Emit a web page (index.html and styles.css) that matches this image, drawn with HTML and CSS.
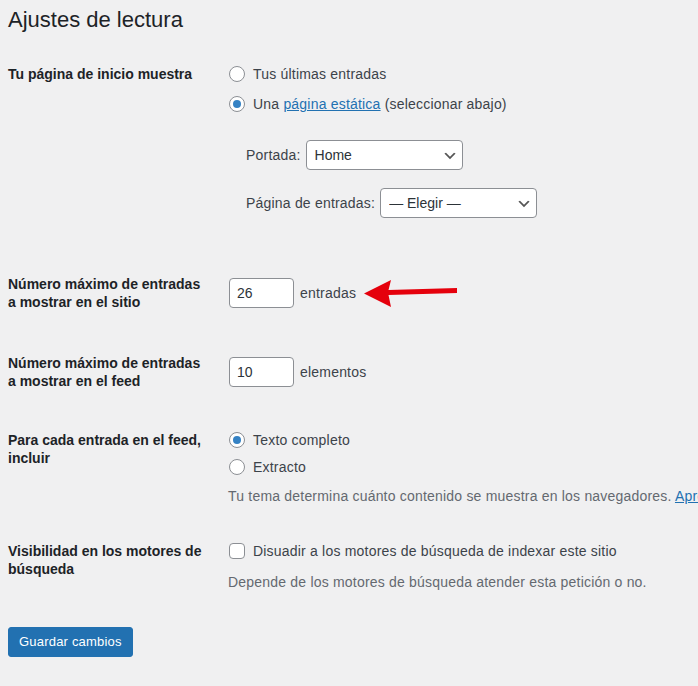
FILE: index.html
```html
<!DOCTYPE html>
<html lang="es">
<head>
    <meta charset="UTF-8">
    <meta name="viewport" content="width=device-width, initial-scale=1.0">
    <title>Ajustes de lectura</title>
    <link rel="stylesheet" href="styles.css">
</head>
<body>
    <h1 class="page-title">Ajustes de lectura</h1>

    <form class="settings" onsubmit="return false">
        <div class="field-row row-front">
            <div class="field-label">Tu página de inicio muestra</div>
            <div class="field-body">
                <label class="choice"><input type="radio" name="show_on_front"> Tus últimas entradas</label>
                <label class="choice"><input type="radio" name="show_on_front" checked> <span>Una <a href="#">página estática</a> (seleccionar abajo)</span></label>
                <div class="page-selects">
                    <div class="select-line">
                        <span>Portada:</span>
                        <div class="select-wrap">
                            <select><option>Home</option></select>
                            <svg class="chevron" viewBox="0 0 20 20" width="16" height="16"><path d="M5 6l5 5 5-5 2 1-7 7-7-7 2-1z"/></svg>
                        </div>
                    </div>
                    <div class="select-line">
                        <span>Página de entradas:</span>
                        <div class="select-wrap">
                            <select><option>— Elegir —</option></select>
                            <svg class="chevron" viewBox="0 0 20 20" width="16" height="16"><path d="M5 6l5 5 5-5 2 1-7 7-7-7 2-1z"/></svg>
                        </div>
                    </div>
                </div>
            </div>
        </div>

        <div class="field-row row-posts">
            <div class="field-label">Número máximo de entradas a mostrar en el sitio</div>
            <div class="field-body">
                <div class="number-line">
                    <input type="text" class="small-text" value="26">
                    <span>entradas</span>
                    <svg class="callout-arrow" viewBox="0 0 95 28" width="95" height="28"><path d="M1 14.5 L28 1 L25.5 11 L94 9 L94 14 L25.5 16 L28 28 Z"/></svg>
                </div>
            </div>
        </div>

        <div class="field-row row-feed-count">
            <div class="field-label">Número máximo de entradas a mostrar en el feed</div>
            <div class="field-body">
                <div class="number-line">
                    <input type="text" class="small-text" value="10">
                    <span>elementos</span>
                </div>
            </div>
        </div>

        <div class="field-row row-feed">
            <div class="field-label">Para cada entrada en el feed, incluir</div>
            <div class="field-body">
                <label class="choice"><input type="radio" name="rss_use_excerpt" checked> Texto completo</label>
                <label class="choice"><input type="radio" name="rss_use_excerpt"> Extracto</label>
                <p class="description">Tu tema determina cuánto contenido se muestra en los navegadores. <a href="#">Aprende más sobre los feeds</a>.</p>
            </div>
        </div>

        <div class="field-row row-visibility">
            <div class="field-label">Visibilidad en los motores de búsqueda</div>
            <div class="field-body">
                <label class="choice"><input type="checkbox"> Disuadir a los motores de búsqueda de indexar este sitio</label>
                <p class="description">Depende de los motores de búsqueda atender esta petición o no.</p>
            </div>
        </div>

        <div class="submit">
            <button type="submit" class="button-primary">Guardar cambios</button>
        </div>
    </form>
</body>
</html>
```

FILE: styles.css
```css
html, body {
    overflow-x: hidden;
}
body {
    margin: 0;
    padding: 0 8px;
    background: #f0f0f1;
    font-family: "Liberation Sans", Arial, sans-serif;
    font-size: 14px;
    letter-spacing: 0.2px;
    color: #3c434a;
}
a {
    color: #2271b1;
}
.page-title {
    margin: 5px 0 0;
    font-size: 22px;
    font-weight: 400;
    line-height: 30px;
    letter-spacing: 0;
    color: #1d2327;
}
.settings {
    margin: 0;
}
.field-row {
    display: grid;
    grid-template-columns: 220px 1fr;
    align-items: start;
}
.field-label {
    width: 200px;
    padding-top: 1px;
    font-weight: 700;
    line-height: 18px;
    letter-spacing: 0;
    color: #1d2327;
}
.row-front { margin-top: 29px; }
.row-posts { margin-top: 57px; }
.row-feed-count { margin-top: 43px; }
.row-feed { margin-top: 40px; }
.row-visibility { margin-top: 35px; }
.row-posts .field-label,
.row-feed-count .field-label {
    padding-top: 0;
}
.row-posts .field-body,
.row-feed-count .field-body {
    padding-top: 3px;
}
.choice {
    display: flex;
    align-items: center;
    gap: 8px;
    height: 20px;
    line-height: 20px;
    white-space: nowrap;
}
.choice + .choice {
    margin-top: 10px;
}
.row-feed .choice + .choice {
    margin-top: 7px;
}
input[type=radio],
input[type=checkbox] {
    appearance: none;
    -webkit-appearance: none;
    box-sizing: border-box;
    width: 16px;
    height: 16px;
    margin: 0 0 0 1px;
    flex: none;
    border: 1px solid #8c8f94;
    background: #fff;
    display: inline-grid;
    place-content: center;
}
input[type=radio] {
    border-radius: 50%;
}
input[type=radio]:checked::before {
    content: "";
    width: 8px;
    height: 8px;
    border-radius: 50%;
    background: #3582c4;
}
input[type=checkbox] {
    border-radius: 4px;
}
.page-selects {
    margin-top: 26px;
    padding-left: 18px;
}
.select-line {
    display: flex;
    align-items: center;
    gap: 5px;
    height: 30px;
}
.select-line + .select-line {
    margin-top: 18px;
}
.select-wrap {
    position: relative;
    width: 157px;
}
.select-wrap select {
    appearance: none;
    -webkit-appearance: none;
    box-sizing: border-box;
    width: 100%;
    height: 30px;
    margin: 0;
    padding: 0 24px 0 8px;
    border: 1px solid #8c8f94;
    border-radius: 4px;
    background: #fff;
    font: inherit;
    color: #2c3338;
}
.chevron {
    position: absolute;
    right: 5px;
    top: 8px;
    fill: #555;
    pointer-events: none;
}
.number-line {
    display: flex;
    align-items: center;
    gap: 6px;
}
.small-text {
    box-sizing: border-box;
    width: 65px;
    height: 30px;
    margin: 0 0 0 1px;
    padding: 0 7px;
    border: 1px solid #8c8f94;
    border-radius: 4px;
    background: #fff;
    font: inherit;
    color: #2c3338;
}
.callout-arrow {
    margin-left: 1px;
    fill: #e5000c;
}
.description {
    margin: 9px 0 0;
    line-height: 20px;
    color: #646970;
    white-space: nowrap;
}
.row-visibility .description {
    margin-top: 11px;
}
.submit {
    margin-top: 35px;
}
.button-primary {
    height: 30px;
    padding: 0 10px;
    border: 1px solid #2271b1;
    border-radius: 3px;
    background: #2271b1;
    color: #fff;
    font-family: inherit;
    font-size: 13px;
    letter-spacing: 0.2px;
    line-height: 28px;
    cursor: pointer;
}
```
